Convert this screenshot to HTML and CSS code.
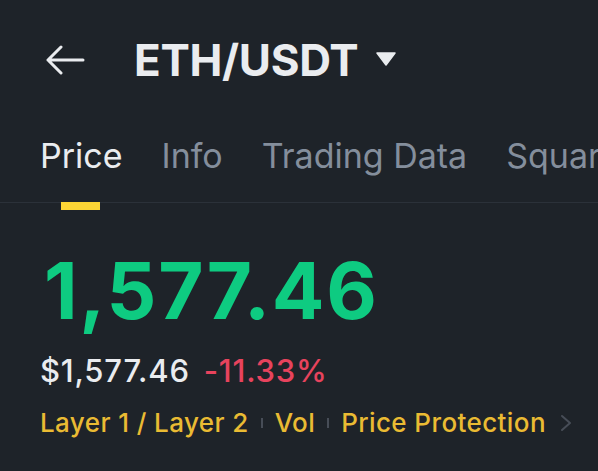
FILE: index.html
```html
<!DOCTYPE html>
<html lang="en">
<head>
<meta charset="utf-8">
<title>ETH/USDT</title>
<link rel="stylesheet" href="styles.css">
</head>
<body>
<div class="app">
  <header class="topbar">
    <svg class="back" width="40" height="30" viewBox="0 0 40 30" aria-hidden="true">
      <path d="M16 2 L3 15 L16 28 M3 15 H38" fill="none" stroke="#eaecef" stroke-width="3" stroke-linecap="round" stroke-linejoin="round"/>
    </svg>
    <h1 class="pair">ETH/USDT</h1>
    <svg class="caret" width="20" height="14" viewBox="0 0 20 14" aria-hidden="true">
      <path d="M1 1 H19 L10 13 Z" fill="#eaecef" stroke="#eaecef" stroke-width="1.5" stroke-linejoin="round"/>
    </svg>
  </header>
  <nav class="tabs">
    <div class="tab active">Price<span class="indicator"></span></div>
    <div class="tab">Info</div>
    <div class="tab">Trading Data</div>
    <div class="tab">Square</div>
  </nav>
  <section class="quote">
    <div class="last">1,577.46</div>
    <div class="sub">
      <span class="fiat">$1,577.46</span>
      <span class="change">-11.33%</span>
    </div>
    <div class="tags">
      <span class="tag">Layer 1 / Layer 2</span>
      <span class="sep"></span>
      <span class="tag">Vol</span>
      <span class="sep"></span>
      <span class="tag">Price Protection</span>
      <svg class="chev" width="12" height="18" viewBox="0 0 12 18" aria-hidden="true">
        <path d="M2 2 L10 9 L2 16" fill="none" stroke="#474d57" stroke-width="2" stroke-linecap="round" stroke-linejoin="round"/>
      </svg>
    </div>
  </section>
</div>
</body>
</html>
```

FILE: styles.css
```css
html, body {
  margin: 0;
  padding: 0;
  background: #1e2329;
}
body {
  font-family: Inter, "Noto Sans", sans-serif;
  color: #eaecef;
  overflow: hidden;
}
.app {
  width: 598px;
  height: 471px;
  overflow: hidden;
}
.topbar {
  height: 120px;
  display: flex;
  align-items: center;
  padding-left: 45px;
  box-sizing: border-box;
}
.back {
  display: block;
  margin-right: 49px;
}
.pair {
  margin: 0;
  font-size: 44px;
  font-weight: 700;
  line-height: 1;
  letter-spacing: -0.3px;
  color: #eaecef;
}
.caret {
  display: block;
  margin-left: 18px;
  margin-top: -2px;
}
.tabs {
  height: 83px;
  display: flex;
  gap: 39px;
  padding-left: 40px;
  border-bottom: 1px solid #2b3139;
  box-sizing: border-box;
  white-space: nowrap;
}
.tab {
  position: relative;
  font-size: 34px;
  font-weight: 400;
  line-height: 71px;
  color: #848e9c;
}
.tab.active {
  color: #eaecef;
}
.indicator {
  position: absolute;
  left: 50%;
  bottom: -8px;
  width: 39px;
  height: 8px;
  margin-left: -20px;
  background: #fcd535;
}
.quote {
  padding-left: 44px;
}
.last {
  margin-top: 43px;
  font-size: 78px;
  font-weight: 700;
  line-height: 90px;
  color: #0ecb81;
  letter-spacing: 1.7px;
}
.sub {
  display: flex;
  gap: 14px;
  margin-left: -4px;
  margin-top: 17px;
  font-size: 31px;
  line-height: 36px;
  font-weight: 500;
  letter-spacing: 0.8px;
}
.fiat {
  color: #eaecef;
}
.change {
  color: #e8435d;
}
.tags {
  display: flex;
  align-items: center;
  margin-left: -4px;
  margin-top: 17px;
  font-size: 26px;
  line-height: 34px;
  font-weight: 500;
  letter-spacing: 0.4px;
  white-space: nowrap;
}
.tag {
  color: #eabb33;
}
.sep {
  width: 2px;
  height: 10px;
  margin: 0 12px;
  background: #474d57;
}
.chev {
  display: block;
  margin-left: 14px;
}
```
